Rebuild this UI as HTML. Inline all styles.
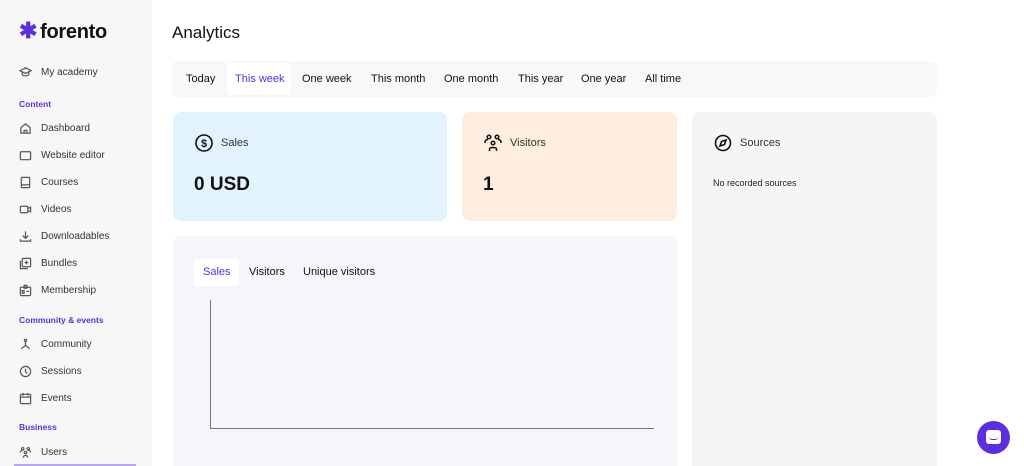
<!DOCTYPE html>
<html style="width:1024px;height:466px;overflow:hidden"><head><meta charset="utf-8"><style>
*{box-sizing:border-box;margin:0;padding:0}
body{width:1024px;height:466px;overflow:hidden;background:#fff;font-family:"Liberation Sans",sans-serif;color:#1a1a1a;position:relative}
.sb{position:absolute;left:0;top:0;width:152px;height:466px;background:#f8f7f7}
.logo{position:absolute;left:19px;top:18px;font-size:20px;font-weight:bold;letter-spacing:-0.3px;color:#111}
.logo span{color:#5b2ee0;font-size:22px;margin-right:3px}
.it{position:absolute;left:19px;font-size:10px;color:#333;display:flex;align-items:center}
.it svg{width:13px;height:13px;margin-right:9px;fill:none;stroke:#555;stroke-width:1.3}
.sec{position:absolute;left:19px;font-size:8.5px;font-weight:bold;color:#5b2ee0}
.abs{position:absolute}
h1{position:absolute;left:172px;top:23px;font-size:17px;font-weight:normal;color:#111}
.tabs{position:absolute;left:172px;top:61px;width:765px;height:36px;background:#f9f8f7;border-radius:6px}
.tab{position:absolute;top:12px;font-size:11px;color:#111}
.pill{position:absolute;background:#fff;border-radius:4px}
.card{position:absolute;border-radius:8px 8px 0 0}
</style></head><body>
<div class="sb">
<div class="logo"><span>✱</span>forento</div>
<div class="it" style="top:66px"><svg viewBox="0 0 14 14"><path d="M1 5l6-3 6 3-6 3z M3.5 6.5v3c2 1.5 5 1.5 7 0v-3"/></svg>My academy</div>
<div class="sec" style="top:99px">Content</div>
<div class="it" style="top:122px"><svg viewBox="0 0 14 14"><path d="M2 6l5-4 5 4v6H2z M5.5 12V9h3v3"/></svg>Dashboard</div>
<div class="it" style="top:149px"><svg viewBox="0 0 14 14"><rect x="1.5" y="3" width="11" height="8.5" rx="1"/></svg>Website editor</div>
<div class="it" style="top:176px"><svg viewBox="0 0 14 14"><rect x="2.5" y="1.5" width="9" height="11" rx="1"/><path d="M2.5 9.5h9"/></svg>Courses</div>
<div class="it" style="top:203px"><svg viewBox="0 0 14 14"><rect x="1.5" y="3.5" width="8" height="7" rx="1"/><path d="M9.5 6l3-1.5v5l-3-1.5"/></svg>Videos</div>
<div class="it" style="top:230px"><svg viewBox="0 0 14 14"><path d="M7 1.5v7M4 6l3 3 3-3M1.5 10v2h11v-2"/></svg>Downloadables</div>
<div class="it" style="top:257px"><svg viewBox="0 0 14 14"><rect x="3.5" y="1.5" width="9" height="9" rx="1"/><path d="M1.5 4v8.5h8M8 4v4M6 6h4"/></svg>Bundles</div>
<div class="it" style="top:284px"><svg viewBox="0 0 14 14"><rect x="1.5" y="3.5" width="11" height="9" rx="1"/><path d="M5.5 1.5h3v3h-3zM3.5 7h2v3h-2zM8 8h3"/></svg>Membership</div>
<div class="sec" style="top:315px">Community &amp; events</div>
<div class="it" style="top:338px"><svg viewBox="0 0 14 14"><circle cx="7" cy="2.5" r="1.2"/><path d="M7 4v4L2.5 11.5M7 8l4.5 3.5"/></svg>Community</div>
<div class="it" style="top:365px"><svg viewBox="0 0 14 14"><circle cx="7" cy="7" r="5.5"/><path d="M7 4v3.5l2 1.5"/></svg>Sessions</div>
<div class="it" style="top:392px"><svg viewBox="0 0 14 14"><rect x="1.5" y="2.5" width="11" height="10" rx="1"/><path d="M1.5 5.5h11M4.5 1v3M9.5 1v3"/></svg>Events</div>
<div class="sec" style="top:422px">Business</div>
<div class="it" style="top:446px"><svg viewBox="0 0 14 14"><circle cx="4" cy="3" r="1.3"/><circle cx="10" cy="3" r="1.3"/><circle cx="7" cy="7" r="1.3"/><path d="M4.5 12.5c0-3 5-3 5 0M1.5 7c0-2 2-2.5 2.5-2.5M12.5 7c0-2-2-2.5-2.5-2.5"/></svg>Users</div>
<div class="abs" style="left:14px;top:464px;width:122px;height:2px;background:#b9a6f0"></div>
</div>

<h1>Analytics</h1>
<div class="tabs">
<div class="pill" style="left:55px;top:2px;width:64px;height:32px"></div>
<div class="tab" style="left:14px">Today</div>
<div class="tab" style="left:63px;color:#5b2ee0">This week</div>
<div class="tab" style="left:130px">One week</div>
<div class="tab" style="left:199px">This month</div>
<div class="tab" style="left:272px">One month</div>
<div class="tab" style="left:346px">This year</div>
<div class="tab" style="left:409px">One year</div>
<div class="tab" style="left:473px">All time</div>
</div>

<div class="card" style="left:173px;top:112px;width:274px;height:109px;background:#e3f3fd;border-radius:8px">
<svg class="abs" style="left:22px;top:22px" width="18" height="18" viewBox="0 0 18 18"><circle cx="9" cy="9" r="8" fill="none" stroke="#111" stroke-width="1.6"/><text x="9" y="13" font-size="11" font-weight="bold" text-anchor="middle" font-family="Liberation Sans" fill="#111">$</text></svg>
<div class="abs" style="left:48px;top:25px;font-size:11px;color:#333">Sales</div>
<div class="abs" style="left:21px;top:62px;font-size:19px;font-weight:bold;color:#111">0 USD</div>
</div>
<div class="card" style="left:462px;top:112px;width:215px;height:109px;background:#fdeedf;border-radius:8px">
<svg class="abs" style="left:22px;top:22px" width="18" height="18" viewBox="0 0 18 18" fill="none" stroke="#111" stroke-width="1.5"><circle cx="5" cy="3" r="1.8"/><circle cx="13" cy="3" r="1.8"/><circle cx="9" cy="9" r="1.8"/><path d="M5.5 17v-2c0-2 7-2 7 0v2M1 9V8c0-2 2-2.5 3-2.5M17 9V8c0-2-2-2.5-3-2.5"/></svg>
<div class="abs" style="left:48px;top:25px;font-size:11px;color:#333">Visitors</div>
<div class="abs" style="left:21px;top:62px;font-size:19px;font-weight:bold;color:#111">1</div>
</div>
<div class="card" style="left:692px;top:112px;width:245px;height:354px;background:#f5f5f5">
<svg class="abs" style="left:22px;top:22px" width="18" height="18" viewBox="0 0 18 18" fill="none" stroke="#111" stroke-width="1.6"><circle cx="9" cy="9" r="7.5"/><path d="M12 6l-1.5 4.5L6 12l1.5-4.5z"/></svg>
<div class="abs" style="left:48px;top:25px;font-size:11px;color:#333">Sources</div>
<div class="abs" style="left:21px;top:66px;font-size:9px;color:#222">No recorded sources</div>
</div>
<div class="card" style="left:173px;top:236px;width:504px;height:230px;background:#f7f5fc">
<div class="pill" style="left:21px;top:23px;width:45px;height:27px"></div>
<div class="abs" style="left:30px;top:30px;font-size:11px;color:#5b2ee0">Sales</div>
<div class="abs" style="left:76px;top:30px;font-size:11px;color:#111">Visitors</div>
<div class="abs" style="left:130px;top:30px;font-size:11px;color:#111">Unique visitors</div>
<div class="abs" style="left:37px;top:64px;width:1px;height:129px;background:#777"></div>
<div class="abs" style="left:37px;top:192px;width:444px;height:1px;background:#777"></div>
</div>
<div class="abs" style="left:977px;top:421px;width:33px;height:33px;border-radius:50%;background:#5b2ee0">
<div class="abs" style="left:9px;top:9px;width:15px;height:14px;border-radius:3px;background:#fff"></div>
<div class="abs" style="left:12px;top:16px;width:9px;height:3px;border-bottom:1.3px solid #5b2ee0;border-radius:0 0 5px 5px"></div>
</div>
</body></html>
